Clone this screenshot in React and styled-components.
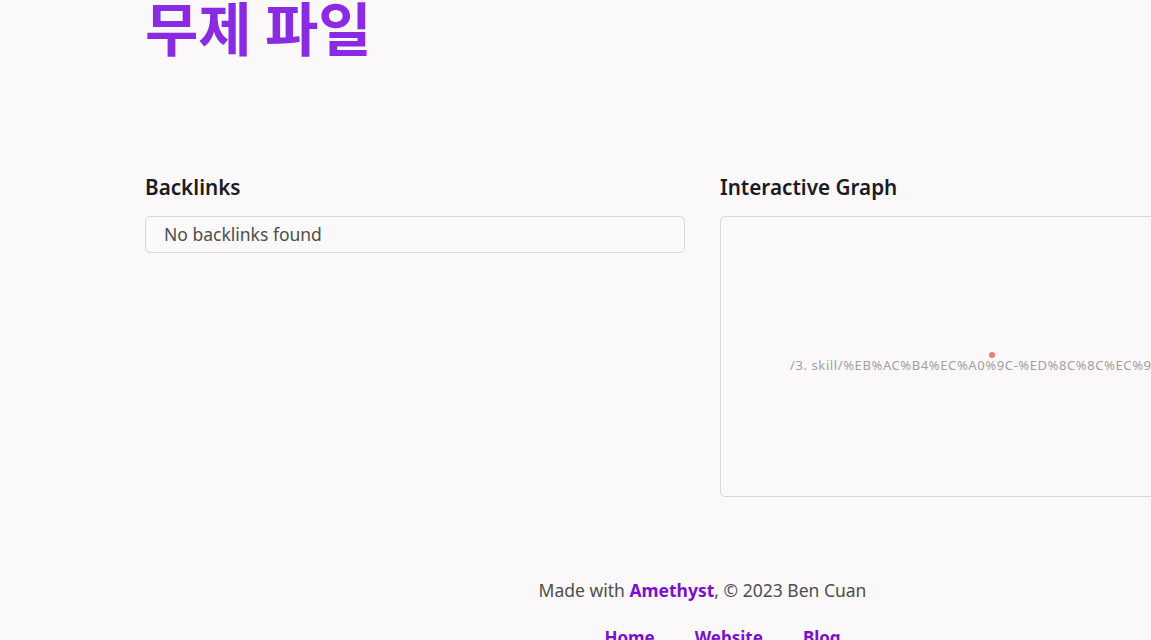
import React from "react";
import styled, { createGlobalStyle } from "styled-components";

const Global = createGlobalStyle`
  html, body { margin: 0; padding: 0; background: #faf8f8; overflow-x: hidden; }
  body { font-family: "Noto Sans", "Noto Sans CJK KR", sans-serif; color: #4e4e4e; }
`;

const Page = styled.div`
  width: 1115px;
  padding-left: 145px;
`;

const Title = styled.h1`
  margin: -8px 0 0 0;
  font-family: "Noto Sans CJK KR", "Noto Sans", sans-serif;
  font-size: 58px;
  font-weight: 700;
  line-height: 1.2;
  color: #8a2be2;
`;

const Columns = styled.div`
  display: grid;
  grid-template-columns: 540px 540px;
  column-gap: 35px;
  margin-top: 112px;
`;

const Section = styled.section`
  display: flex;
  flex-direction: column;
`;

const Heading = styled.h3`
  margin: 0 0 16px 0;
  font-size: 20.7px;
  font-weight: 600;
  line-height: 26px;
  color: #1c1a24;
`;

const Box = styled.div`
  box-sizing: border-box;
  border: 1px solid #d9d7d9;
  border-radius: 5px;
  padding: 0 18px;
  height: 37px;
  display: flex;
  align-items: center;
  font-size: 17.5px;
  color: #4e4e4e;
`;

const Graph = styled.div`
  position: relative;
  box-sizing: border-box;
  border: 1px solid #d9d7d9;
  border-radius: 5px;
  height: 281px;
  overflow: hidden;
`;

const Node = styled.div`
  position: absolute;
  left: 268px;
  top: 135px;
  width: 6px;
  height: 6px;
  border-radius: 50%;
  background: #ef7b7b;
`;

const NodeLabel = styled.div`
  position: absolute;
  left: 69px;
  top: 139px;
  font-size: 13px;
  letter-spacing: 0.6px;
  white-space: nowrap;
  color: #a19fa2;
`;

const Footer = styled.footer`
  margin-top: 80px;
  text-align: center;
`;

const Credit = styled.p`
  margin: 0;
  font-size: 17.5px;
  line-height: 26px;
  color: #4e4e4e;
`;

const Link = styled.a`
  color: #7b0fd1;
  font-weight: 700;
  text-decoration: none;
`;

const LinkList = styled.ul`
  list-style: none;
  display: flex;
  justify-content: center;
  gap: 40px;
  margin: 22px 0 0 0;
  padding: 0 0 0 40px;
  font-size: 17px;
  line-height: 26px;
`;

export default function App() {
  return (
    <>
      <Global />
      <Page>
        <Title>무제 파일</Title>
        <Columns>
          <Section>
            <Heading>Backlinks</Heading>
            <Box>No backlinks found</Box>
          </Section>
          <Section>
            <Heading>Interactive Graph</Heading>
            <Graph>
              <Node />
              <NodeLabel>/3. skill/%EB%AC%B4%EC%A0%9C-%ED%8C%8C%EC%9D%BC</NodeLabel>
            </Graph>
          </Section>
        </Columns>
        <Footer>
          <Credit>
            Made with <Link href="#">Amethyst</Link>, © 2023 Ben Cuan
          </Credit>
          <LinkList>
            <li><Link href="#">Home</Link></li>
            <li><Link href="#">Website</Link></li>
            <li><Link href="#">Blog</Link></li>
          </LinkList>
        </Footer>
      </Page>
    </>
  );
}
